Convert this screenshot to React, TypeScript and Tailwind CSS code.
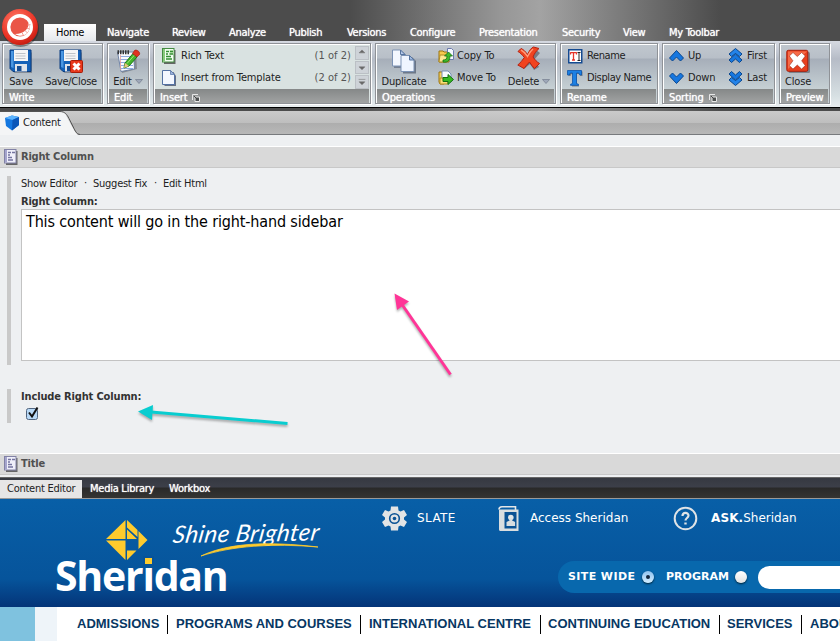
import type { ReactNode } from "react";

const tahoma = "font-['DejaVu_Sans_Condensed','DejaVu_Sans',sans-serif]";

/* ---------- icons ---------- */

function Floppy({ close = false }: { close?: boolean }) {
  return (
    <svg width="24" height="25" viewBox="0 0 24 25" className="block">
      <path d="M3 3.500h20v20.500h-17.500l-2.500-2.500z" fill="#555b66" opacity=".5" />
      <path d="M1 1h21v21.500H4l-3-3z" fill="#1562b8" stroke="#0b3d80" />
      <path d="M2 2h2.500v17L2 18z" fill="#4b97e2" />
      <path d="M5 1h14v11H5z" fill="#f6f6f6" />
      <path d="M6.500 4.500h10M6.500 7h10M6.500 9.500h10" stroke="#bfc3c8" strokeWidth="1" />
      <path d="M6 15h12v7.500H6z" fill="#dfe4ea" />
      <path d="M8 17h4.500v5H8z" fill="#174f96" />
      {close && (
        <g>
          <rect x="11.500" y="11.500" width="12" height="12" rx="1" fill="#e8381c" stroke="#a81c08" />
          <path d="M14.500 14.500l6 6M20.500 14.500l-6 6" stroke="#fff" strokeWidth="3" />
        </g>
      )}
    </svg>
  );
}

function Notepad() {
  return (
    <svg width="25" height="25" viewBox="0 0 25 25" className="block">
      <path d="M3 4l17-1 1 17-15 4z" fill="#555" opacity=".45" />
      <path d="M1.500 3h16l1 17-13.500 2.500z" fill="#f8faff" stroke="#7084a6" />
      <path d="M4 7.500h12M4 10.500h12M4 13.500h12M5 16.500h12M5 19.500h12" stroke="#8fabe0" />
      <path d="M4.500 6v15" stroke="#e89a9a" strokeWidth=".8" />
      <path d="M1.500 3.300h12" stroke="#333" strokeWidth="4" strokeDasharray="1.500 1" />
      <path d="M9 14l8-9.500 4 3.500-8 9-5 2z" fill="#44b42b" stroke="#1f7616" />
      <path d="M8 19l1-5 4 3z" fill="#e9c480" />
      <path d="M11 14.500l8-9" stroke="#a1e676" />
      <path d="M16.500 4.500l2-3c2-1.500 6 1.500 5 4L21 8z" fill="#df3320" stroke="#9e2413" strokeWidth=".7" />
    </svg>
  );
}

function RichTextIcon({ green = true }: { green?: boolean }) {
  return (
    <svg width="15" height="16" viewBox="0 0 15 16" className="block">
      <path d="M2 2h11.500v14H2z" fill="#666" />
      <rect x=".5" y=".5" width="11.500" height="13.500" fill={green ? "#f2fff0" : "#efeffa"} stroke={green ? "#458b42" : "#8181a5"} />
      <rect x="1" y="1" width="2" height="12.500" fill={green ? "#87ca7d" : "#a5a5cd"} />
      {green && <path d="M7.500 2h4v4h-4z" fill="#c9ecbd" />}
      <path
        d={green ? "M4 3.500h3M8 3.500h3M4 6h2M7.500 6h3.500M4 8.500h5M4 11h6" : "M4 3.500h3M8 3.500h3M4 6h2M4 8.500h4M4 11h5"}
        stroke={green ? "#338f32" : "#7474a0"}
        strokeWidth="1.300"
      />
    </svg>
  );
}

function PageIcon() {
  return (
    <svg width="15" height="17" viewBox="0 0 15 17" className="block">
      <path d="M2.500 2h9l2.500 4v10h-11.500z" fill="#667084" />
      <path d="M.5.500H8.500L12.500 4.500v10H.5z" fill="#f3f7ff" stroke="#5371a3" />
      <path d="M8.500.5v4h4z" fill="#9db5dd" stroke="#5371a3" strokeWidth=".7" />
    </svg>
  );
}

function DuplicateIcon() {
  return (
    <svg width="24" height="25" viewBox="0 0 24 25" className="block">
      <path d="M2 3h9l4 4v12H2z" fill="#606a7c" opacity=".7" />
      <path d="M.5 1h8l4.500 4.500V17H.5z" fill="#f4f8ff" stroke="#7c93b5" />
      <path d="M8.500 1v4.500H13z" fill="#b4c8e9" stroke="#56749f" />
      <path d="M11 8h9l4 4v12.500H11z" fill="#5b6678" opacity=".8" />
      <path d="M9 6.500h8.500L22 11v11.500H9z" fill="#eff5ff" stroke="#7c93b5" />
      <path d="M17.500 6.500V11H22z" fill="#9fb9e1" stroke="#56749f" />
    </svg>
  );
}

function TransferIcon({ move = false }: { move?: boolean }) {
  return (
    <svg width="16" height="16" viewBox="0 0 16 16" className="block">
      {move ? (
        <>
          <path d="M1 2h4l1 1v11H2l-1-2z" fill="#f7d35b" stroke="#9b7512" />
          <path d="M4 1h6l3 3v8H4z" fill="#f8fbff" stroke="#7991b5" />
          <path d="M2 8h8v6H2z" fill="#f9df78" stroke="#b18c25" />
          <path d="M5 7.500h5V4.500l5.500 5-5.500 5v-3H5z" fill="#37ba22" stroke="#147011" />
        </>
      ) : (
        <>
          <path d="M1 3h4l1 1h5v10H1z" fill="#f5c94d" stroke="#9b7512" />
          <path d="M9.500.5h4l2 2v9h-6z" fill="#f5f8ff" stroke="#6c7aac" />
          <path d="M2 7h8l-1 7H1z" fill="#fce891" stroke="#b18c25" />
          <path d="M5 12c3 0 4-1 4-4H6.500L10.500 4l4 4H12c0 4-2 7-7 6z" fill="#40b82a" stroke="#147011" strokeWidth=".8" />
        </>
      )}
    </svg>
  );
}

function DeleteIcon() {
  return (
    <svg width="24" height="25" viewBox="0 0 24 25" className="-mt-[3px] mb-[3px] block">
      <path d="M6 4l7 7 5-8 5 4-6 7 5 7-5 3-4-6-6 5-3-5 5-4-5-7z" fill="#4d4d55" opacity=".6" />
      <path d="M4 2.500c2.500 1 4.500 3 6.500 6 2-4 3.500-6.500 6-7.500L22 2.500c-3 2.500-4.500 5-6 8.500 2 3 4 5 6.500 6.500l-5 5c-2-2-3.500-4-5-6.500-2 2-4 4.500-5.500 6.500L.8 19c2.500-2 4.500-4.500 6.500-7.500C5.500 9 3.500 7 1 5.500z" fill="#f0431f" stroke="#b42110" />
      <path d="M4 4c3 1.500 5 4 6.500 6.500 2-4 3.500-6 5.500-7.500" fill="none" stroke="#ff9a78" strokeWidth="1.400" />
    </svg>
  );
}

function RenameIcon() {
  return (
    <svg width="15" height="15" viewBox="0 0 15 15" className="block">
      <rect x=".75" y=".75" width="13" height="13" fill="#fff" stroke="#144a91" strokeWidth="1.500" />
      <path d="M2.500 3.700h6M5.500 4v7M4 11h3M2.500 3.200v2.300M8.500 3.200v2.300" stroke="#e6352a" strokeWidth="1.300" fill="none" />
      <path d="M9.500 3.500h3M11 3.500v8M9.500 11.500h3" stroke="#222" />
    </svg>
  );
}

function TypeIcon() {
  return (
    <svg width="16" height="17" viewBox="0 0 16 17" className="-ml-px block">
      <path d="M1.500 1.500h14v4.500h-2l-1-2h-2.500v10l2 1v1.500H5V15l2-1V4H4.500l-1 2h-2z" fill="#44505e" opacity=".6" />
      <path d="M.5.500h14V5h-1.800l-1-2H9.500v10.500l2 .8v1h-8v-1l2-.8V3H3.300l-1 2H.5z" fill="#1c80e3" stroke="#0b54ac" strokeWidth=".8" />
    </svg>
  );
}

function Chevrons({ down = false, double = false }: { down?: boolean; double?: boolean }) {
  return (
    <svg width="15" height="17" viewBox="0 0 15 17" className="block">
      <g transform={down ? "rotate(180 7.500 8)" : undefined}>
        {double ? (
          <>
            <path d="M7.500.5l6.500 5.500-2.500 2.500-4-3-4 3L1 6z" fill="#2383e9" stroke="#0a478e" />
            <path d="M7.500 6l6.500 6-2.500 2.500-4-3.500-4 3.500L1 12z" fill="#1777df" stroke="#0a478e" />
          </>
        ) : (
          <path d="M7.500 2.500l7 7.500-3 3-4-4-4 4-3-3z" fill="#1777df" stroke="#0a478e" />
        )}
      </g>
    </svg>
  );
}

function CloseIcon() {
  return (
    <svg width="24" height="25" viewBox="0 0 24 25" className="block">
      <rect x="2.500" y="3" width="21.500" height="21" rx="1.500" fill="#555b65" opacity=".6" />
      <rect x=".8" y="1.300" width="21" height="21" rx="1.500" fill="#e8401e" stroke="#a81d0b" />
      <path d="M2 2.500h19L2 20z" fill="#ff8260" opacity=".65" />
      <path d="M7 3.500l4.300 4 4.300-4L19.300 7l-3.600 4.800 3.600 4.800-3.700 3.500-4.300-4-4.300 4L3.300 16.600l3.600-4.800L3.300 7z" fill="#fff" stroke="#9e2b18" strokeWidth=".6" />
    </svg>
  );
}

function Launcher() {
  return (
    <svg width="8" height="8" viewBox="0 0 8 8" className="ml-[5px] block">
      <path d="M.5 6V.5H6" fill="none" stroke="#e8e8e8" />
      <path d="M3 3h4.500v4.500H3z" fill="#4f5252" stroke="#e8e8e8" />
      <path d="M2 2l3 3" fill="none" stroke="#444" />
    </svg>
  );
}

function Caret() {
  return (
    <svg width="8" height="5" viewBox="0 0 8 5" className="ml-[3px] block">
      <path d="M.5.500h7L4 4.500z" fill="#9ea8b9" stroke="#747d8d" strokeWidth=".7" />
    </svg>
  );
}

/* ---------- ribbon ---------- */

function Group({ label, width, launcher, light, children }: { label: string; width: string; launcher?: boolean; light?: boolean; children: ReactNode }) {
  return (
    <section className={`${width} h-[61px] shrink-0 border border-[#8f9297] shadow-[1px_1px_0_#fff,inset_1px_1px_0_#fff] ${light ? "bg-[#d9e2e1]" : "bg-[linear-gradient(#c0c7ce_0,#b8bfc8_14px,#a6aeb9_15px,#c6d0d4_45px)]"}`}>
      <div className="flex h-[45px]">{children}</div>
      <div className="mx-px flex h-[14px] items-center bg-[linear-gradient(#858888,#a1a3a3)] pt-[4px] pl-[5px] text-[11px] leading-[12px] tracking-[-0.15px] text-white [text-shadow:0_0_1px_#fff]">
        {label}
        {launcher && <Launcher />}
      </div>
    </section>
  );
}

function Big({ icon, label, width, caret }: { icon: ReactNode; label: string; width: string; caret?: boolean }) {
  return (
    <button className={`flex ${width} shrink-0 flex-col items-center pt-[5px]`}>
      {icon}
      <span className="mt-px flex h-[13px] items-center leading-[13px] whitespace-nowrap">
        {label}
        {caret && <Caret />}
      </span>
    </button>
  );
}

function Small({ icon, label, count }: { icon: ReactNode; label: string; count?: string }) {
  return (
    <div className="flex h-[22px] items-center whitespace-nowrap">
      <span className="w-[19px] shrink-0">{icon}</span>
      <span className="mt-px">{label}</span>
      {count && <span className="mt-px ml-auto tracking-[0.05px] text-[#555]">{count}</span>}
    </div>
  );
}

const tabs = [
  ["Navigate", "w-[42px]"],
  ["Review", "w-[34px]"],
  ["Analyze", "w-[37px]"],
  ["Publish", "w-[35px]"],
  ["Versions", "w-[40px]"],
  ["Configure", "w-[46px]"],
  ["Presentation", "w-[60px]"],
  ["Security", "w-[38px]"],
  ["View", "w-[23px]"],
  ["My Toolbar", "w-[52px]"],
];

function Ribbon() {
  return (
    <div className="flex h-[66px] gap-[4px] bg-[linear-gradient(#d5d9e1_0,#b6bcc7_18px,#d7e0e3_55px,#e8edef)] pt-[2px] pl-[2px] text-[11px] tracking-[-0.15px] text-[#222]">
      <Group label="Write" width="w-[101px]">
        <Big icon={<Floppy />} label="Save" width="ml-[3px] w-[30px]" />
        <Big icon={<Floppy close />} label="Save/Close" width="ml-[5px] w-[60px] tracking-[-0.3px]" />
      </Group>
      <Group label="Edit" width="w-[42px]">
        <Big icon={<Notepad />} label="Edit" width="w-[40px]" caret />
      </Group>
      <Group label="Insert" width="w-[218px]" launcher light>
        <div className="ml-[8px] w-[189px] pt-px">
          <Small icon={<RichTextIcon />} label="Rich Text" count="(1 of 2)" />
          <Small icon={<PageIcon />} label="Insert from Template" count="(2 of 2)" />
        </div>
        <div className="ml-[4px] flex w-[15px] flex-col gap-px pt-[2px]">
          {["M3 6l3-3 3 3z", "M3 5h6L6 8z", "M2.500 3.500h7M3 6h6L6 9z"].map((d) => (
            <svg key={d} viewBox="0 0 12 12" className="h-[14px] w-[14px] border border-[#bbc0c5] bg-[#ced3d8]">
              <path d={d} fill="#666" stroke="#777" strokeWidth=".6" />
            </svg>
          ))}
        </div>
      </Group>
      <Group label="Operations" width="w-[181px]">
        <Big icon={<DuplicateIcon />} label="Duplicate" width="ml-[3px] w-[50px] tracking-[-0.25px]" />
        <div className="ml-[9px] w-[62px] pt-px">
          <Small icon={<TransferIcon />} label="Copy To" />
          <Small icon={<TransferIcon move />} label="Move To" />
        </div>
        <Big icon={<DeleteIcon />} label="Delete" width="ml-[6px] w-[46px]" caret />
      </Group>
      <Group label="Rename" width="w-[98px]">
        <div className="ml-[7px] pt-px tracking-[-0.38px]">
          <Small icon={<RenameIcon />} label="Rename" />
          <Small icon={<TypeIcon />} label="Display Name" />
        </div>
      </Group>
      <Group label="Sorting" width="w-[113px]" launcher>
        <div className="ml-[6px] w-[59px] pt-px">
          <Small icon={<Chevrons />} label="Up" />
          <Small icon={<Chevrons down />} label="Down" />
        </div>
        <div className="pt-px">
          <Small icon={<Chevrons double />} label="First" />
          <Small icon={<Chevrons double down />} label="Last" />
        </div>
      </Group>
      <Group label="Preview" width="w-[51px]">
        <Big icon={<CloseIcon />} label="Close" width="ml-[3px] w-[30px]" />
      </Group>
    </div>
  );
}

const metal = "bg-[linear-gradient(90deg,#4c4c4c_0,#4c4c4c_350px,#969696_500px,#a3a3a3_540px,#858585_600px,#4c4c4c_720px,#4c4c4c)]";

function SectionBar({ title }: { title: string }) {
  return (
    <div className="flex h-[22px] items-center border-t border-b border-t-white border-b-[#c8c8c8] bg-[#d9d9d9] pl-[4px] text-[11px] font-bold tracking-[-0.2px] text-[#505050]">
      <RichTextIcon green={false} />
      <span className="ml-[2px]">{title}</span>
    </div>
  );
}

/* ---------- site preview ---------- */

function Logo() {
  return (
    <div className="relative w-[172px] pt-[21px] pl-[49px]">
      <svg width="42" height="40" viewBox="0 0 42 40" className="block">
        <path d="M19.500 0v19H0zM0 20.500h19.500V40zM21 0l10.500 10v7L21 7.500zM21 9.500l10 9.500H21zM32.500 11l9 9-9 9zM21 30.500h9.500L21 40z" fill="#ffcb2d" />
      </svg>
      <div className="absolute top-[46px] left-[-2px] font-['Open_Sans','Noto_Sans',sans-serif] text-[41px] leading-[60px] font-bold tracking-[-1.25px] text-white">
        Sher
        <span className="relative">
          i<span className="absolute top-[11px] left-[3px] h-[6px] w-[7px] bg-[#ffcb2d] shadow-[0_0_0_2px_#07539a]" />
        </span>
        dan
      </div>
    </div>
  );
}

function Gear() {
  return (
    <svg width="25" height="25" viewBox="0 0 25 25" className="block">
      <path d="M9 .5h7l.5 4 2 1L22 4l3 5-3 2.500v2L25 16l-3 5-3.500-1.500-2 1-.5 4H9l-.5-4-2-1L3 21l-3-5 3-2.500v-2L0 9l3-5 3.500 1.500 2-1z" fill="#e2e4e5" />
      <circle cx="12.500" cy="12.500" r="4.800" fill="none" stroke="#0b5294" strokeWidth="1.600" />
      <circle cx="12.500" cy="12.500" r="1.800" fill="#0b5294" />
    </svg>
  );
}

function Book() {
  return (
    <svg width="22" height="26" viewBox="0 0 22 26" className="block">
      <path d="M1 3.500C1 1.500 2 .8 4 .8h13.500V4" fill="none" stroke="#e3e6e8" strokeWidth="1.600" />
      <path d="M1 3.500h19.500V25H2.500C1.500 25 1 24.300 1 23.500z" fill="#d9dddf" />
      <path d="M6.500 6h12v16.500h-12z" fill="#0b5294" />
      <circle cx="12.800" cy="11.500" r="2.800" fill="#e2e6e8" />
      <path d="M8.500 20v-4l3-1.500v-2h2.600v2l3 1.500v4z" fill="#d8dde0" />
    </svg>
  );
}

function Site() {
  return (
    <>
      <header className="flex h-[108px] bg-[linear-gradient(#085fa7_0,#06549b_80px,#043478_108px)] pl-[57px]">
        <Logo />
        <div className="relative -ml-[58px] w-[154px] pt-[20px]">
          <div className="origin-bottom-left rotate-[-1deg] skew-x-[-10deg] font-['Lato',sans-serif] text-[24px] leading-[30px] tracking-[0.45px] whitespace-nowrap text-white italic">
            Shine Brighter
          </div>
          <svg width="120" height="16" viewBox="0 0 120 16" className="absolute top-[43px] left-[29px]">
            <path d="M1 14C28 1 67-1 118 5 72 1 32 4 1 14z" fill="#ffcb2d" stroke="#ffcb2d" strokeWidth=".8" />
          </svg>
        </div>
        <div className="ml-[57px] flex-1 font-['DejaVu_Sans',sans-serif] text-white">
          <div className="flex h-[39px] items-center text-[12px]">
            <Gear />
            <span className="-mt-px ml-[10px] w-[81px] tracking-[0.4px]">SLATE</span>
            <Book />
            <span className="-mt-px ml-[10px] w-[143px] whitespace-nowrap">Access Sheridan</span>
            <svg width="25" height="25" viewBox="0 0 25 25" className="block">
              <circle cx="12.500" cy="12.500" r="10.800" fill="none" stroke="#dfe3e6" strokeWidth="2" />
              <path d="M9.500 10c0-4 6-4 6-.5 0 2.500-3 2.500-3 5" fill="none" stroke="#dfe3e6" strokeWidth="2.200" />
              <path d="M11.300 16.500h2.400v2h-2.400z" fill="#dfe3e6" />
            </svg>
            <span className="-mt-px ml-[13px] whitespace-nowrap"><b className="tracking-[0.1px]">ASK.</b>Sheridan</span>
          </div>
          <div className="mt-[23px] ml-[176px] flex h-[32px] items-center rounded-l-full bg-[#0868ad] pl-[10px] text-[11px] font-bold whitespace-nowrap">
            <span className="w-[74px] tracking-[0.4px]">SITE WIDE</span>
            <span className="-mt-px flex h-[12px] w-[12px] items-center justify-center rounded-full bg-[linear-gradient(#8fc2ef,#d2edff)] shadow-[0_1px_2px_#023]">
              <span className="h-[4px] w-[4px] rounded-full bg-[#12253d]" />
            </span>
            <span className="ml-[12px] w-[69px]">PROGRAM</span>
            <span className="-mt-px h-[12px] w-[12px] rounded-full bg-[linear-gradient(#fff,#e1e1e1)] shadow-[0_1px_2px_#023]" />
            <span className="ml-[11px] h-[23px] flex-1 rounded-l-full bg-white" />
          </div>
        </div>
      </header>
      <nav className="flex h-[34px] overflow-hidden bg-white font-['Liberation_Sans',sans-serif] text-[13px] leading-[17px] font-bold whitespace-nowrap text-[#073763]">
        <div className="w-[35px] shrink-0 bg-[#7fc2df]" />
        <div className="w-[22px] shrink-0 bg-[#eef4f9]" />
        <div className="flex shrink-0 pt-[8px] pl-[20px]">
          <span className="w-[90px]">ADMISSIONS</span>
          <span className="h-[19px] w-[193px] border-l border-black pl-[8px]">PROGRAMS AND COURSES</span>
          <span className="h-[19px] w-[180px] border-l border-black pl-[8px]">INTERNATIONAL CENTRE</span>
          <span className="h-[19px] w-[179px] border-l border-black pl-[7px]">CONTINUING EDUCATION</span>
          <span className="h-[19px] w-[82px] border-l border-black pl-[7px]">SERVICES</span>
          <span className="h-[19px] border-l border-black pl-[8px]">ABOUT</span>
        </div>
      </nav>
    </>
  );
}

export default function App() {
  return (
    <div className={`relative h-[641px] w-[840px] overflow-hidden bg-[#eef0f2] ${tahoma}`}>
      <div className={`flex h-[41px] items-end pl-[44px] text-[11px] whitespace-nowrap ${metal}`}>
        <span className="h-[17px] w-[52px] bg-[linear-gradient(#fff,#e5e8ec)] text-center leading-[17px] tracking-[-0.3px] text-black">Home</span>
        <div className="ml-[11px] flex h-[17px] gap-[23px] leading-[17px] tracking-[-0.3px] text-white [text-shadow:0_0_1px_#fff]">
          {tabs.map(([name, width]) => (
            <span key={name} className={width}>{name}</span>
          ))}
        </div>
      </div>
      <svg width="42" height="42" viewBox="0 0 42 42" className="absolute top-[7px] left-0">
        <defs>
          <radialGradient id="orb" cx=".4" cy=".3" r=".8">
            <stop offset="0" stopColor="#ff7a68" />
            <stop offset=".65" stopColor="#ea3325" />
            <stop offset="1" stopColor="#b5120a" />
          </radialGradient>
        </defs>
        <circle cx="20.500" cy="21.500" r="18.500" fill="#222" opacity=".45" />
        <circle cx="20" cy="20" r="18" fill="url(#orb)" />
        <circle cx="20" cy="20" r="11.300" fill="#ea5547" stroke="#fff" strokeWidth="3.400" />
        <path d="M28 14c2.500 7-4 13-13 13 6 4 14.500 1 14.500-7 0-2-.5-4-1.500-6z" fill="#fff" />
        <path d="M22 25.500l1.500 3M25 23.500l2.500 2.500M26.800 21l3 1.200M27.500 18l3-.3" stroke="#ee9186" strokeWidth=".9" />
      </svg>
      <Ribbon />
      <div className={`h-[4px] border-t border-black ${metal}`} />
      <div className="h-[24px] border-b border-[#777a7d] bg-[linear-gradient(#cacaca_0,#bebebe_12px,#adadad_12px,#b8b8b8)]">
        <div className="relative flex h-[24px] w-[80px] items-center pl-[5px] text-[11px]">
          <svg width="80" height="24" viewBox="0 0 80 24" className="absolute top-0 left-0">
            <path d="M0 1h60c5 0 6 3 8 7l6 11c2 3 3 5 6 5H0z" fill="#f4f5f6" />
            <path d="M0 .5h60c5 0 7 3 9 7l5 10c2 4 3 5.500 6 6" fill="none" stroke="#555" />
          </svg>
          <svg width="15" height="16" viewBox="0 0 15 16" className="relative">
            <path d="M0 3l7-2.500L14 2v8l-7 5.500L1 11z" fill="#1477e0" />
            <path d="M0 3l7-2.500L14 2 7.500 5z" fill="#5ab3ff" />
            <path d="M7.500 5L14 2v8l-7 5.500z" fill="#0a55b8" />
          </svg>
          <span className="relative ml-[3px] tracking-[-0.25px] text-[#222]">Content</span>
        </div>
      </div>
      <div className="h-[11px]" />
      <SectionBar title="Right Column" />
      <div className="mt-[8px] ml-[7px] h-[189px] border-l-4 border-[#c9c9c9] pl-[10px] text-[11px] text-[#222]">
        <div className="flex h-[15px] leading-[15px] tracking-[-0.25px] whitespace-nowrap">
          <span className="w-[63px]">Show Editor</span>
          <span className="-mt-px w-[9px]">·</span>
          <span className="w-[61px]">Suggest Fix</span>
          <span className="-mt-px w-[9px]">·</span>
          <span>Edit Html</span>
        </div>
        <div className="h-[18px] pt-[3px] leading-[15px] font-bold tracking-[-0.2px] text-[#333]">Right Column:</div>
        <div className="h-[152px] border border-r-0 border-[#c3c3c3] bg-white pl-[4px] text-[16px] leading-[24px] tracking-[-0.15px] text-black">
          This content will go in the right-hand sidebar
        </div>
      </div>
      <div className="mt-[24px] ml-[7px] h-[34px] border-l-4 border-[#c9c9c9] pl-[10px] text-[11px]">
        <div className="h-[18px] leading-[15px] font-bold tracking-[-0.15px] text-[#333]">Include Right Column:</div>
        <svg width="15" height="15" viewBox="0 0 15 15" className="-mt-px ml-[4px] block">
          <rect x="1.500" y="2.500" width="11" height="11" rx="2" fill="#b8d9f7" stroke="#51657f" />
          <path d="M4 6.500l3 4 5.500-9" fill="none" stroke="#111" strokeWidth="2" />
        </svg>
      </div>
      <div className="h-[30px]" />
      <SectionBar title="Title" />
      <div className="h-[2px]" />
      <div className="flex h-[22px] border-t border-b border-t-[#666] border-b-[#999] bg-[linear-gradient(#363941_0,#3c3f49_9px,#292929_10px,#353432)] pt-[2px] text-[11px] leading-[18px] tracking-[-0.25px] whitespace-nowrap text-white">
        <span className="h-[18px] w-[82px] bg-[#e6e6e6] pl-[7px] text-[#222]">Content Editor</span>
        <span className="w-[79px] pl-[8px] [text-shadow:0_0_1px_#fff]">Media Library</span>
        <span className="pl-[8px] [text-shadow:0_0_1px_#fff]">Workbox</span>
      </div>
      <Site />
      <svg width="340" height="160" viewBox="0 0 340 160" className="pointer-events-none absolute top-[285px] left-[130px] drop-shadow-[0_2px_1px_rgba(0,0,0,0.3)]">
        <path d="M320.500 89.500L271 18" stroke="#ff3597" strokeWidth="3" />
        <path d="M264.500 8.500l14.500 8-12 8.500z" fill="#ff3597" />
        <path d="M157.500 138.500L21 127" stroke="#08cdd0" strokeWidth="3" />
        <path d="M8 126.500l15-6.500-1 15z" fill="#08cdd0" />
      </svg>
    </div>
  );
}
